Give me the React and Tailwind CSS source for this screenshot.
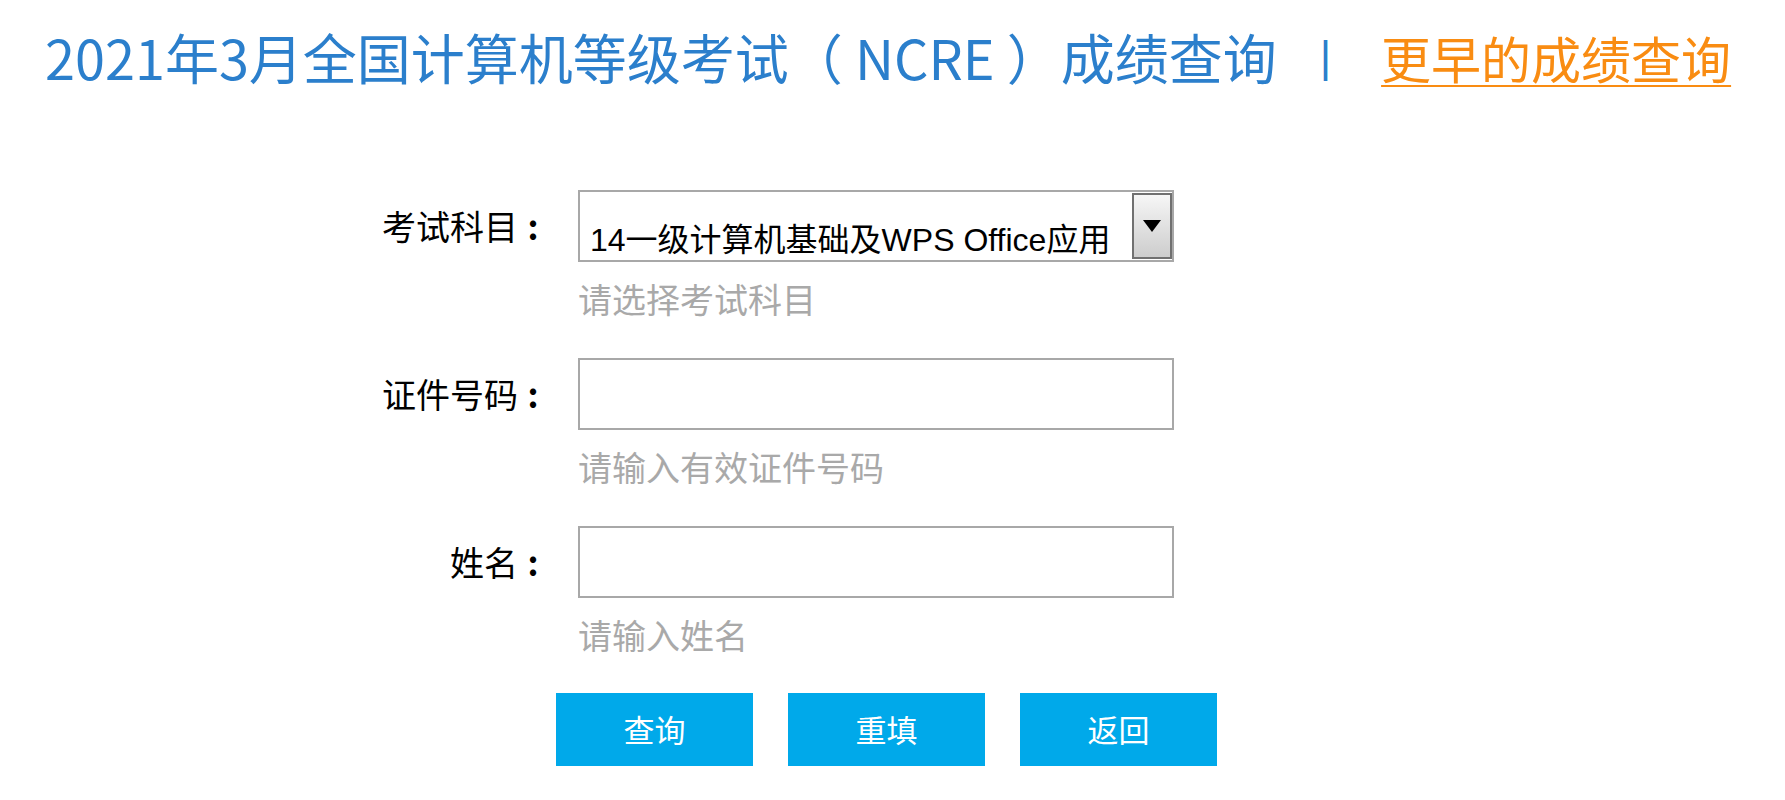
import React, { useState } from 'react';

const cjk = { fontFamily: '"Noto Sans CJK SC", "Liberation Sans", sans-serif' };

const FormRow = ({ label, hint, children }) => {
  return (
    <div className="flex items-start">
      <div className="w-[548px] h-[72px] flex items-center justify-end text-[34px] leading-[46px] text-black">
        {label}
        <span className="inline-block w-[30px] text-center font-bold">:</span>
      </div>
      <div className="ml-[30px] w-[596px]">
        {children}
        <div className="mt-[14px] text-[34px] leading-[46px] text-[#a9a9a9]">{hint}</div>
      </div>
    </div>
  );
};

const App = () => {
  const [idNumber, setIdNumber] = useState('');
  const [name, setName] = useState('');

  const handleReset = () => {
    setIdNumber('');
    setName('');
  };

  return (
    <div className="min-h-screen bg-white" style={cjk}>
      {/* header */}
      <div className="pt-[22px] pl-[45px] flex items-center h-[92px]">
        <h1 className="text-[54px] leading-[70px] text-[#2b7fcc] font-normal whitespace-nowrap">
          2021年3月全国计算机等级考试（ NCRE ）成绩查询
        </h1>
        <span className="ml-[43px] text-[44px] leading-[70px] text-[#2b7fcc]" style={{ fontFamily: '"Liberation Sans", sans-serif' }}>|</span>
        <a href="#" className="ml-[50px] text-[50px] leading-[70px] text-[#f98c12] underline underline-offset-[6px] decoration-[2px] whitespace-nowrap">
          更早的成绩查询
        </a>
      </div>

      <form className="mt-[98px] flex flex-col gap-[36px]" onSubmit={(e) => e.preventDefault()}>
        <FormRow label="考试科目" hint="请选择考试科目">
          <div className="h-[72px] border-2 border-[#a8a8a8] flex bg-white">
            <div
              className="flex-1 pl-[10px] pt-[30px] text-[32px] leading-[36px] text-black whitespace-nowrap overflow-hidden"
              style={{ fontFamily: '"Liberation Sans", "Noto Sans CJK SC", sans-serif' }}
            >
              14一级计算机基础及WPS Office应用
            </div>
            <div className="w-[40px] my-[1px] border-2 border-[#707070] bg-gradient-to-b from-[#f6f6f6] to-[#cdcdcd] flex items-center justify-center">
              <svg width="18" height="12" viewBox="0 0 18 12">
                <path d="M0 0 L18 0 L9 12 Z" fill="#000" />
              </svg>
            </div>
          </div>
        </FormRow>

        <FormRow label="证件号码" hint="请输入有效证件号码">
          <input
            type="text"
            className="block w-full h-[72px] border-2 border-[#a8a8a8] px-3 text-[30px] outline-none"
            value={idNumber}
            onChange={(e) => setIdNumber(e.target.value)}
          />
        </FormRow>

        <FormRow label="姓名" hint="请输入姓名">
          <input
            type="text"
            className="block w-full h-[72px] border-2 border-[#a8a8a8] px-3 text-[30px] outline-none"
            value={name}
            onChange={(e) => setName(e.target.value)}
          />
        </FormRow>

        <div className="pl-[556px] -mt-[1px] flex gap-[35px]">
          <button type="submit" className="w-[197px] h-[73px] bg-[#00a9ea] text-white text-[31px]">查询</button>
          <button type="button" onClick={handleReset} className="w-[197px] h-[73px] bg-[#00a9ea] text-white text-[31px]">重填</button>
          <button type="button" className="w-[197px] h-[73px] bg-[#00a9ea] text-white text-[31px]">返回</button>
        </div>
      </form>
    </div>
  );
};

export default App;
